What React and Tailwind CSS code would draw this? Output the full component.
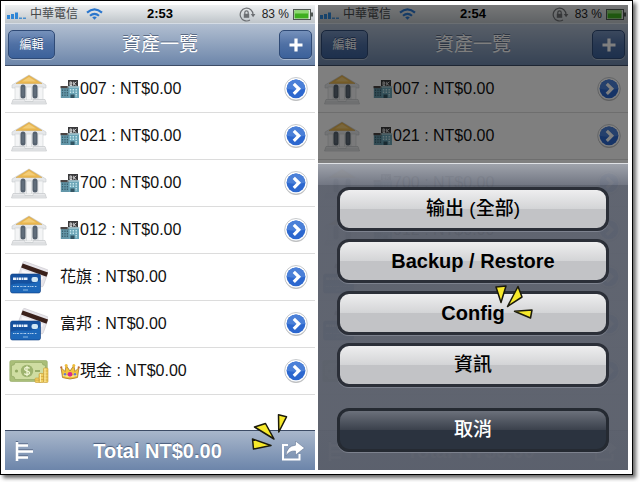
import React from 'react';

const accounts = [
    { id: 1, kind: "bank", tag: "building", label: "007 : NT$0.00" },
    { id: 2, kind: "bank", tag: "building", label: "021 : NT$0.00" },
    { id: 3, kind: "bank", tag: "building", label: "700 : NT$0.00" },
    { id: 4, kind: "bank", tag: "building", label: "012 : NT$0.00" },
    { id: 5, kind: "card", label: "花旗 : NT$0.00" },
    { id: 6, kind: "card", label: "富邦 : NT$0.00" },
    { id: 7, kind: "cash", tag: "crown", label: "現金 : NT$0.00" },
];

function BankIcon() {
    return (
        <svg width="36" height="31" viewBox="0 0 36 31" aria-hidden="true">
            <path d="M18 1 L35 11 V14 H1 V11 Z" fill="#e6e8ea" stroke="#c6c9cc" strokeWidth=".6" />
            <path d="M18 1.5 L31 9.5 H5 Z" fill="#e9b64e" stroke="#d3aa55" strokeWidth=".6" />
            <path d="M18 3 L25 7.5 H11 Z" fill="#f3cd78" />
            <rect x="4" y="13" width="28" height="13" fill="#e9eaec" />
            <rect x="4" y="13" width="5" height="13" fill="#f4f5f6" stroke="#cdd0d3" strokeWidth=".6" />
            <rect x="15.5" y="13" width="5" height="13" fill="#f4f5f6" stroke="#cdd0d3" strokeWidth=".6" />
            <rect x="27" y="13" width="5" height="13" fill="#f4f5f6" stroke="#cdd0d3" strokeWidth=".6" />
            <rect x="9.5" y="10.5" width="5" height="14" rx="2.5" fill="#56626f" />
            <rect x="21.5" y="10.5" width="5" height="14" rx="2.5" fill="#56626f" />
            <path d="M12 13 V22 M24 13 V22" stroke="#6b7987" strokeWidth="1" />
            <path d="M2 25.5 H14 V27.5 H22 V25.5 H34 L35.5 30 H.5 Z" fill="#e9eaec" stroke="#bfc2c6" strokeWidth=".6" />
            <path d="M1.5 28 H34.5" stroke="#c8cacd" strokeWidth=".6" />
        </svg>
    );
}

function CardIcon() {
    return (
        <svg width="38" height="33" viewBox="0 0 38 33" aria-hidden="true">
            <g transform="rotate(20 23 12)">
                <rect x="10" y="4" width="27" height="18" rx="1.5" fill="#e7e5ea" stroke="#cbc9cf" strokeWidth=".6" />
                <rect x="10" y="6.5" width="27" height="4.5" fill="#3a211b" />
                <rect x="12" y="12.5" width="22" height="3" fill="#f8f7fa" />
            </g>
            <rect x=".5" y="13" width="30" height="19" rx="2" fill="#15519f" stroke="#0e3f83" strokeWidth=".6" />
            <path d="M1 24 C10 20 20 26 30 19 V30 Q30 31.5 28.5 31.5 H2.5 Q1 31.5 1 30 Z" fill="#1d68ba" />
            <path d="M3 17.8 H18" stroke="#eaf2fb" strokeWidth="2.6" strokeDasharray="3 .5 1.5 .5" />
            <rect x="21.5" y="16" width="6.5" height="5" rx="2" fill="#cfe6f4" />
            <path d="M3 25.5 H27" stroke="#b3d1ef" strokeWidth="1.2" strokeDasharray="1.5 .7 1 .7 2 1.4" />
            <path d="M13 29 H18" stroke="#8db9e4" strokeWidth="1" />
        </svg>
    );
}

function CashIcon() {
    return (
        <svg width="40" height="25" viewBox="0 0 40 25" aria-hidden="true">
            <rect x=".8" y="1.5" width="37.5" height="21" rx="1.5" fill="#a9be78" stroke="#93a966" strokeWidth=".6" />
            <path d="M6 3.5 H33 Q33 6.5 36.5 6.5 V17 Q33 17 33 20.5 H6 Q6 17 2.5 17 V6.5 Q6 6.5 6 3.5 Z" fill="#cfdda2" stroke="#8da55f" strokeWidth=".6" />
            <circle cx="18" cy="12" r="6.2" fill="#9db36e" />
            <path d="M20.6 9.4 Q18 7.6 16 9 Q14.8 11 17.8 11.8 Q21.6 12.8 20.2 14.8 Q18 16.4 15.2 14.6 M18 6.8 V17.2" fill="none" stroke="#eff5d3" strokeWidth="1.3" />
            <circle cx="7.5" cy="12" r="1.6" fill="#91a862" />
            <path d="M26 12 H31" stroke="#91a862" strokeWidth="1.8" />
            <g fill="#f0cf62" stroke="#c59a35" strokeWidth=".6">
                <rect x="26" y="19" width="5.5" height="4.5" rx="1" />
                <rect x="30" y="14.5" width="5" height="9" rx="1" />
                <rect x="34.5" y="9" width="4.5" height="14.5" rx="1" />
            </g>
            <path d="M26.5 21.2 H31 M30.5 17.5 H35 M30.5 20.5 H35 M35 12 H39 M35 15 H39 M35 18 H39 M35 21 H39" stroke="#c99c38" strokeWidth=".6" />
            <path d="M36 9.5 V23 M31.5 15 V23" stroke="#fff0b0" strokeWidth=".9" />
        </svg>
    );
}

function BuildingIcon() {
    return (
        <svg width="20" height="20" viewBox="0 0 20 20" aria-hidden="true">
            <rect x="8" y="1" width="10" height="7" fill="#39393b" />
            <path d="M10 2.8 V6.6 M10 3 H11.5 L12 4.7 H10.5 L12 6.5 H10 M13.7 2.8 V6.6 M16.4 2.8 L13.9 4.8 L16.4 6.6" fill="none" stroke="#dcdcdc" strokeWidth=".9" />
            <rect x="8" y="7.5" width="11" height="11.5" fill="#6ba5b7" />
            <rect x=".8" y="9" width="8" height="10" fill="#6396a8" />
            <rect x=".5" y="7" width="8.5" height="2.2" fill="#4a4443" />
            <rect x="7.5" y="7.3" width="12" height="1.3" fill="#b3cfd8" />
            <path d="M2.5 10.5 V18 M5 10.5 V18 M7.4 10.5 V18" stroke="#3b616f" strokeWidth="1.2" strokeDasharray="1.5 1" />
            <path d="M10.5 10 V15 M13.3 10 V15 M16.2 10 V18" stroke="#c6e6ec" strokeWidth="1.4" strokeDasharray="1.5 1" />
            <rect x="10.5" y="15.5" width="4" height="3.5" fill="#335563" />
        </svg>
    );
}

function CrownIcon() {
    return (
        <svg width="20" height="17" viewBox="0 0 20 17" aria-hidden="true">
            <path d="M1 4.5 L5 8.5 L6.2 2.5 L10 8 L13.8 2.5 L15 8.5 L19 4.5 L17.5 14.5 Q10 17.5 2.5 14.5 Z" fill="#f4c63c" stroke="#a8742a" strokeWidth=".8" />
            <path d="M3 12 Q10 15 17 12" fill="none" stroke="#fdeb95" strokeWidth="1.2" />
            <circle cx="6.2" cy="2.5" r="1.5" fill="#efbd3b" />
            <circle cx="13.8" cy="2.5" r="1.5" fill="#efbd3b" />
            <circle cx="1.3" cy="4.3" r="1.1" fill="#bd6b35" />
            <circle cx="18.7" cy="4.3" r="1.1" fill="#bd6b35" />
            <circle cx="10" cy="11.3" r="2.4" fill="#d92b8c" />
            <circle cx="5" cy="11.3" r="1.2" fill="#6678ce" />
            <circle cx="15" cy="11.3" r="1.2" fill="#6678ce" />
        </svg>
    );
}

function ChevronIcon() {
    return (
        <svg width="24" height="26" viewBox="0 0 24 26" aria-hidden="true">
            <circle cx="12" cy="14" r="11" fill="#000" opacity=".25" />
            <circle cx="12" cy="12.8" r="11.3" fill="#fff" stroke="#b9bcc0" strokeWidth=".8" />
            <circle cx="12" cy="12.8" r="9.4" fill="#2d68cf" />
            <path d="M2.6 12.8 A9.4 9.4 0 0 1 21.4 12.8 Q12 14.5 2.6 12.8 Z" fill="#4b80d8" />
            <path d="M9.8 7.8 L14.8 12.8 L9.8 17.8" fill="none" stroke="#fff" strokeWidth="3.2" />
        </svg>
    );
}

function StatusBar({ time }) {
    return (
        <div className="grid h-[18px] grid-cols-[1fr_auto_1fr] items-center bg-linear-to-b from-[#eef0f1] to-[#bfc5ca] px-[2px] text-[#45484b]">
            <div className="flex items-center gap-1">
                <svg width="19" height="9" viewBox="0 0 19 9" aria-hidden="true">
                    <path d="M0 5 H3 V9 H0 Z M4 4 H7 V9 H4 Z M8 2.5 H11 V9 H8 Z" fill="#2f86d6" />
                    <path d="M12 7.5 H15 V9 H12 Z M16 7.5 H19 V9 H16 Z" fill="#4a8fce" />
                </svg>
                <span className="text-xs leading-4">中華電信</span>
                <svg className="ml-1" width="17" height="12" viewBox="0 0 17 12" fill="none" stroke="#2a76cd" strokeWidth="2.1" aria-hidden="true">
                    <path d="M1 4.6 Q8.5 -2 16 4.6" />
                    <path d="M4 7.8 Q8.5 3.8 13 7.8" />
                    <path d="M6.2 9.3 Q8.5 7.5 10.8 9.3 L8.5 11.8 Z" fill="#2a76cd" stroke="none" />
                </svg>
            </div>
            <span className="text-[13px] leading-4 font-bold text-black">{time}</span>
            <div className="flex items-center justify-end gap-1">
                <svg className="mr-[2px]" width="17" height="15" viewBox="0 0 17 15" fill="none" stroke="#6c6f73" strokeWidth="1.2" aria-hidden="true">
                    <path d="M11 13 A6.4 6.4 0 1 1 14 7.8" />
                    <path d="M11.8 7 H16.4 L14.1 10.2 Z" fill="#6c6f73" stroke="none" />
                    <rect x="4.8" y="6.8" width="5.4" height="4" fill="#6c6f73" stroke="none" />
                    <path d="M5.8 7 V5.6 A1.7 1.7 0 0 1 9.2 5.6 V7" />
                </svg>
                <span className="text-xs leading-4 text-[#222]">83 %</span>
                <svg width="20" height="11" viewBox="0 0 20 11" aria-hidden="true">
                    <rect x=".5" y=".5" width="17" height="10" fill="#e4e8e4" stroke="#4f5652" />
                    <rect x="1.5" y="1.5" width="14" height="8" fill="#3fae1f" />
                    <rect x="1.5" y="1.5" width="14" height="3" fill="#8fd873" />
                    <rect x="18" y="3.5" width="2" height="4" fill="#4f5652" />
                </svg>
            </div>
        </div>
    );
}

function NavBar() {
    const button =
        "flex h-[29px] items-center justify-center rounded-[5px] border border-[#2f4a76] bg-linear-to-b from-[#7691bb] via-[#4f70a4] to-[#3b619a] text-xs text-white shadow-[0_1px_0_#a9b8cd]";

    return (
        <div className="grid h-[43px] grid-cols-[1fr_auto_1fr] items-center border-t border-b border-t-[#d5dce5] border-b-[#3d4c66] bg-linear-to-b from-[#b2bfd1] to-[#6d86aa] px-[3px]">
            <button type="button" className={`${button} w-[47px] justify-self-start [text-shadow:0_-1px_0_#2c4570]`}>
                編輯
            </button>
            <h1 className="text-[19px] leading-6 font-normal text-white [text-shadow:0_-1px_0_#5a6a84]">
                資產一覽
            </h1>
            <button type="button" aria-label="新增" className={`${button} w-[33px] justify-self-end`}>
                <svg width="14" height="14" viewBox="0 0 14 14" aria-hidden="true">
                    <path d="M7 .5 V13.5 M.5 7 H13.5" stroke="#fff" strokeWidth="3.2" />
                </svg>
            </button>
        </div>
    );
}

function AccountRow({ kind, tag, label }) {
    return (
        <li className="flex h-[47px] items-center gap-[11px] border-b border-[#dcdcdc] pr-[7px] pl-1">
            <div className="flex w-10 shrink-0 justify-center">
                {kind === "bank" && <BankIcon />}
                {kind === "card" && <CardIcon />}
                {kind === "cash" && <CashIcon />}
            </div>
            <div className="flex flex-1 items-center text-base whitespace-nowrap text-[#111]">
                {tag === "building" && <BuildingIcon />}
                {tag === "crown" && <CrownIcon />}
                <span>{label}</span>
            </div>
            <button type="button" aria-label={label}>
                <ChevronIcon />
            </button>
        </li>
    );
}

function TotalBar({ children }) {
    return (
        <div className="relative flex h-10 items-center justify-between border-t border-[#3d4c66] bg-linear-to-b from-[#a9b7cb] to-[#6c85aa] px-[10px]">
            <button type="button" aria-label="圖表">
                <svg width="19" height="20" viewBox="0 0 19 20" aria-hidden="true">
                    <path d="M2 0 V19 M1 3.5 H13 M1 9.5 H18 M1 15.5 H13" fill="none" stroke="#5d6f8c" strokeWidth="2.4" />
                    <path d="M2 1 V20 M1 4.5 H13 M1 10.5 H18 M1 16.5 H13" fill="none" stroke="#fff" strokeWidth="2.6" />
                </svg>
            </button>
            <p className="text-xl leading-6 font-bold text-white [text-shadow:0_-1px_1px_#4a5c7a]">
                Total NT$0.00
            </p>
            <button type="button" aria-label="分享">
                <svg width="24" height="20" viewBox="0 0 24 20" aria-hidden="true">
                    <path d="M7 4 H2 V18.5 H18.5 V13" fill="none" stroke="#fff" strokeWidth="2" />
                    <path d="M14.5 0 L23.5 7 L14.5 14 V10 Q8 9.5 5 15 Q5.5 5 14.5 4.2 Z" fill="#fff" stroke="#5a6d8d" strokeWidth=".5" />
                </svg>
            </button>
            {children}
        </div>
    );
}

function Screen({ time, footerMark, children }) {
    return (
        <section className="relative flex min-w-0 flex-col overflow-hidden bg-white">
            <StatusBar time={time} />
            <NavBar />
            <ul className="flex-1 pb-[35px]">
                {accounts.map((account) => (
                    <AccountRow key={account.id} {...account} />
                ))}
            </ul>
            <TotalBar>{footerMark}</TotalBar>
            {children}
        </section>
    );
}

function ShareSpark() {
    return (
        <svg className="pointer-events-none absolute -top-[18px] right-[25px]" width="40" height="40" viewBox="0 0 40 40" aria-hidden="true">
            <g fill="#f7e92a" stroke="#1b1a0c" strokeWidth="1.5" strokeLinejoin="round">
                <path d="M4.5 14 L15.5 10.5 L24 26 Z" />
                <path d="M28.5 1.8 L36.5 3.8 L28.8 19 Z" />
                <path d="M2.5 26 L21 32.5 L3.5 36 Z" />
            </g>
        </svg>
    );
}

function ConfigSpark() {
    return (
        <svg className="pointer-events-none absolute -top-[10px] right-[72px]" width="40" height="36" viewBox="0 0 40 36" aria-hidden="true">
            <g fill="#f7e92a" stroke="#1b1a0c" strokeWidth="1.5" strokeLinejoin="round">
                <path d="M2 3 L12 2 L7 18.5 Z" />
                <path d="M24 2.5 L28 13 L13.5 22.5 Z" />
                <path d="M20.5 27.3 L38 26 L36.5 34 Z" />
            </g>
        </svg>
    );
}

function SheetButton({ label, cjk, children }) {
    return (
        <button
            type="button"
            className={`relative flex h-11 w-full items-center justify-center rounded-xl border-3 border-[#2b2f38] bg-linear-to-b from-[#eeeeef] from-0% via-[#d3d4d6] via-50% to-[#c2c3c6] to-50% text-black shadow-[0_1px_0_#7d828e] ${cjk ? "text-[19px] font-medium" : "text-xl font-bold"}`}
        >
            {label}
            {children}
        </button>
    );
}

function ActionSheet() {
    return (
        <div className="absolute inset-0 flex flex-col justify-end bg-black/50">
            <div className="flex flex-col gap-2 border-t border-[#dfe1e5] bg-[linear-gradient(to_bottom,#a1a5aef0_0px,#717683f0_21px,#5f6470f3_21px,#5d626ef3_100%)] px-[19px] pt-[23px] pb-[18px]">
                <SheetButton label="输出 (全部)" cjk />
                <SheetButton label="Backup / Restore" />
                <SheetButton label="Config">
                    <ConfigSpark />
                </SheetButton>
                <SheetButton label="資訊" cjk />
                <button
                    type="button"
                    className="mt-[13px] flex h-11 w-full items-center justify-center rounded-xl border-3 border-[#252a32] bg-linear-to-b from-[#6c717b] from-0% via-[#3b414c] via-50% to-[#2b333f] to-50% text-[19px] font-medium text-white shadow-[0_1px_0_#7d828e]"
                >
                    取消
                </button>
            </div>
        </div>
    );
}

function App() {
    return (
        <main className="bg-white pr-[7px] pb-[7px] font-['Liberation_Sans','Noto_Sans_CJK_TC',sans-serif]">
            <div className="grid grid-cols-2 gap-[3px] border border-black bg-white p-1 shadow-[3px_3px_4px_rgba(0,0,0,0.6)]">
                <Screen time="2:53" footerMark={<ShareSpark />} />
                <Screen time="2:54">
                    <ActionSheet />
                </Screen>
            </div>
        </main>
    );
}

export default App;
